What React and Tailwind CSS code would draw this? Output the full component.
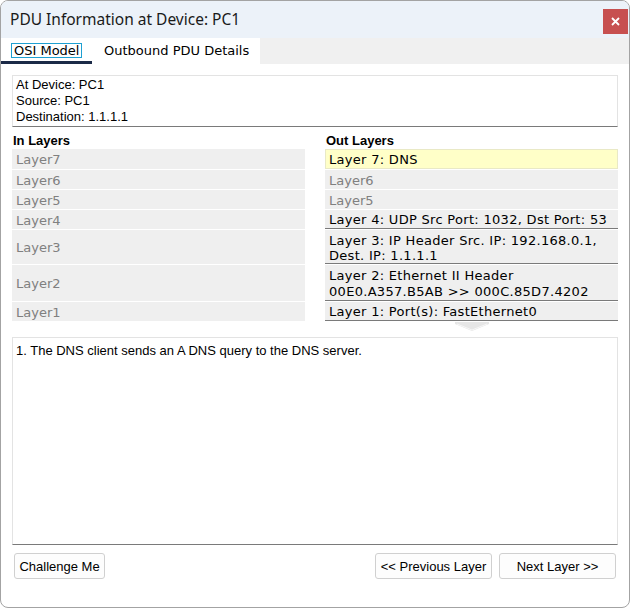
export default function App() {
  const arial = "font-['Liberation_Sans',Arial,sans-serif]";
  const tah = "font-['DejaVu_Sans',Verdana,sans-serif]";
  const inRows = [
    { t: "Layer7", h: "h-[20px]" },
    { t: "Layer6", h: "h-[19px]" },
    { t: "Layer5", h: "h-[19px]" },
    { t: "Layer4", h: "h-[19px]" },
    { t: "Layer3", h: "h-[34px]" },
    { t: "Layer2", h: "h-[36px]" },
    { t: "Layer1", h: "h-[19px]" },
  ];
  return (
    <div className="w-[630px] h-[609px] bg-white">
      <div className="w-[630px] h-[608px] border border-[#a3a3a3] rounded-[8px] overflow-hidden flex flex-col bg-white">
        {/* Title bar */}
        <div className="h-[37px] shrink-0 bg-[#ecf2f9] flex items-start justify-between pl-[9px] pr-[1px]">
          <div className="mt-[9px] text-[15.5px] leading-[18px] text-[#1a1a1a] font-['Noto_Sans',sans-serif]">
            PDU Information at Device: PC1
          </div>
          <div className="mt-[8px] w-[25px] h-[25px] bg-[#c75050] flex items-center justify-center">
            <svg width="9" height="9" viewBox="0 0 9 9">
              <path d="M1 1 L8 8 M8 1 L1 8" stroke="white" strokeWidth="1.8" />
            </svg>
          </div>
        </div>
        {/* Tab strip */}
        <div className="h-[26px] shrink-0 bg-[#f0f0f0] flex">
          <div className="w-[91px] bg-white border-b-[3px] border-[#1b2a47] pl-[10px] pt-[5px]">
            <div className={`w-fit border border-[#1ea0d2] px-[2px] h-[15px] leading-[13px] text-[13px] text-[#000] ${tah}`}>
              OSI Model
            </div>
          </div>
          <div className={`w-[168px] bg-white pl-[12px] pt-[5px] text-[13px] leading-[16px] text-black ${tah}`}>
            Outbound PDU Details
          </div>
        </div>
        {/* Content */}
        <div className="flex-1 flex flex-col px-[11px] pt-[11px]">
          <div className={`h-[52px] border border-[#e3e3e3] border-b-[#7a7a7a] pl-[3px] pt-[1px] text-[13px] leading-[16px] text-black ${arial}`}>
            <div>At Device: PC1</div>
            <div>Source: PC1</div>
            <div>Destination: 1.1.1.1</div>
          </div>
          <div className="mt-[5px] grid grid-cols-[293px_293px] gap-x-[20px]">
            <div className="flex flex-col">
              <div className={`h-[16px] pt-[1px] leading-[16px] text-[13px] font-bold text-black pl-[1px] mb-[1px] ${arial}`}>In Layers</div>
              <div className="flex flex-col gap-[1px]">
                {inRows.map((r) => (
                  <div key={r.t} className={`${r.h} bg-[#efefef] flex items-center pl-[4px] pt-[2px] text-[13px] text-[#808080] ${tah}`}>
                    {r.t}
                  </div>
                ))}
              </div>
            </div>
            <div className="flex flex-col">
              <div className={`h-[16px] pt-[1px] leading-[16px] text-[13px] font-bold text-black pl-[1px] mb-[1px] ${arial}`}>Out Layers</div>
              <div className={`flex flex-col gap-[1px] text-[13px] ${tah}`}>
                <div className="h-[20px] bg-[#ffffc8] border border-[#e9e9c6] flex items-center pl-[3px] pt-[1px] text-black tracking-[0.3px]">
                  Layer 7: DNS
                </div>
                <div className="h-[19px] bg-[#efefef] flex items-center pl-[4px] pt-[2px] text-[#808080]">Layer6</div>
                <div className="h-[19px] bg-[#efefef] flex items-center pl-[4px] pt-[2px] text-[#808080]">Layer5</div>
                <div className="h-[19px] bg-[#efefef] border-b border-[#7a7a7a] flex items-center pl-[4px] pt-[2px] text-black whitespace-nowrap tracking-[0.3px]">
                  Layer 4: UDP Src Port: 1032, Dst Port: 53
                </div>
                <div className="h-[34px] bg-[#efefef] border-b border-[#7a7a7a] flex items-center pl-[4px] pt-[2px] text-black leading-[15px] whitespace-nowrap tracking-[0.3px]">
                  <div>
                    Layer 3: IP Header Src. IP: 192.168.0.1,
                    <br />
                    Dest. IP: 1.1.1.1
                  </div>
                </div>
                <div className="h-[36px] bg-[#efefef] border-b border-[#7a7a7a] flex items-center pl-[4px] pt-[2px] text-black leading-[16px] whitespace-nowrap tracking-[0.3px]">
                  <div>
                    Layer 2: Ethernet II Header
                    <br />
                    00E0.A357.B5AB &gt;&gt; 000C.85D7.4202
                  </div>
                </div>
                <div className="h-[19px] bg-[#efefef] border-b border-[#7a7a7a] flex items-center pl-[4px] pt-[2px] text-black tracking-[0.3px]">
                  Layer 1: Port(s): FastEthernet0
                </div>
              </div>
              <div className="flex justify-center mt-[1px]">
                <svg width="34" height="9" viewBox="0 0 34 9">
                  <path d="M0 0 H34 V2 L17 9 L0 2 Z" fill="#e6e6e6" />
                  <path d="M2 2 L17 8 L32 2" stroke="#f7f7f7" strokeWidth="1" fill="none" />
                </svg>
              </div>
            </div>
          </div>
          <div className={`mt-[6px] h-[208px] border border-[#e3e3e3] border-b-[#7a7a7a] pl-[3px] pt-[5px] text-[13px] leading-[16px] text-black ${arial}`}>
            1. The DNS client sends an A DNS query to the DNS server.
          </div>
          <div className={`mt-[8px] flex items-center text-[13px] text-black ${arial}`}>
            <div className="ml-[2px] w-[91px] h-[26px] pt-[1px] bg-[#fdfdfd] border border-[#d0d0d0] rounded-[3px] flex items-center justify-center">
              Challenge Me
            </div>
            <div className="ml-auto w-[117px] h-[26px] pt-[1px] bg-[#fdfdfd] border border-[#d0d0d0] rounded-[3px] flex items-center justify-center">
              &lt;&lt; Previous Layer
            </div>
            <div className="ml-[7px] mr-[2px] w-[117px] h-[26px] pt-[1px] bg-[#fdfdfd] border border-[#d0d0d0] rounded-[3px] flex items-center justify-center">
              Next Layer &gt;&gt;
            </div>
          </div>
        </div>
      </div>
    </div>
  );
}
